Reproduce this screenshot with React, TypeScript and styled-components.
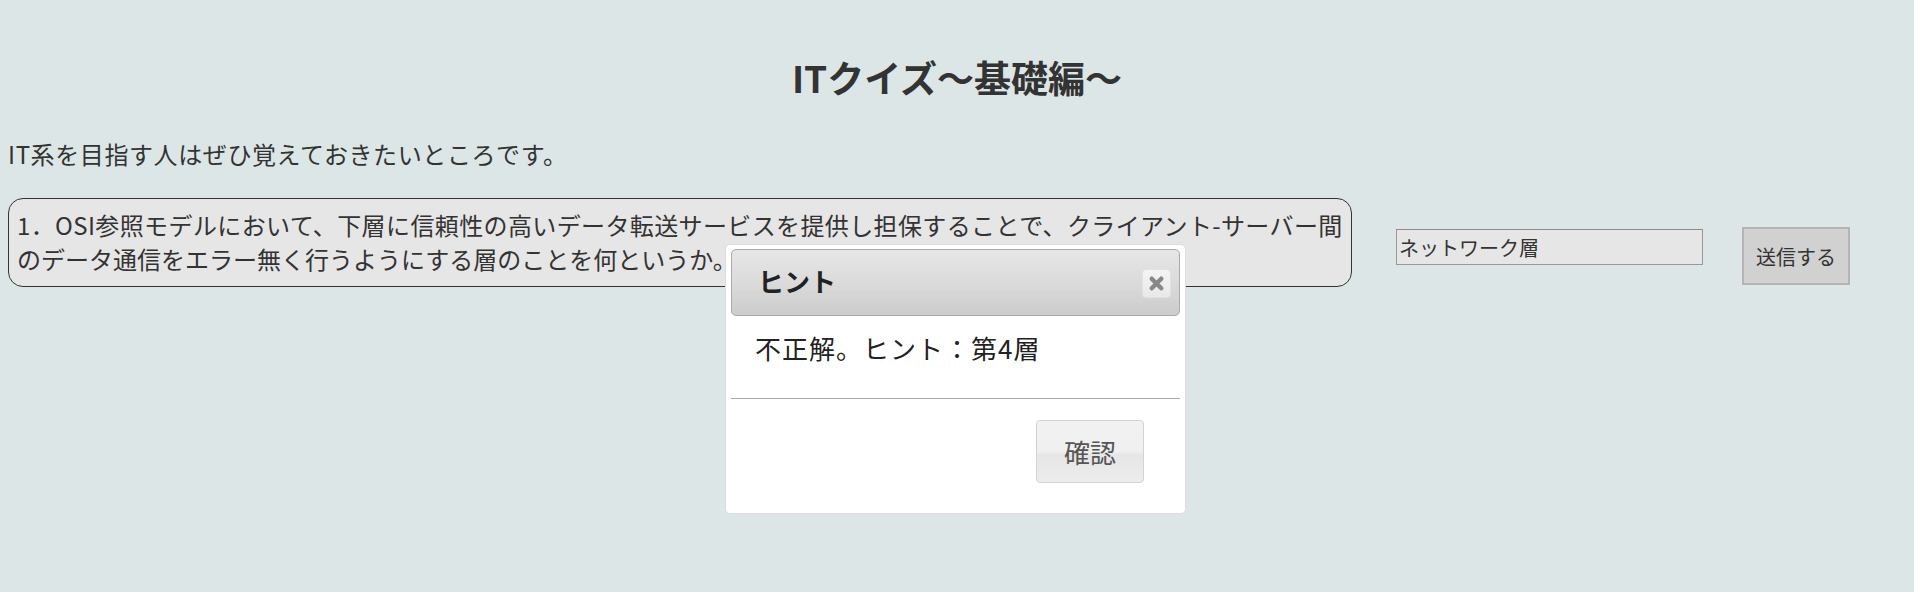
import styled, { createGlobalStyle } from 'styled-components'

const GlobalStyle = createGlobalStyle`
    html, body {
        margin: 0;
        padding: 0;
        background: #dce6e6;
    }
    body {
        font-family: "Noto Sans CJK JP", "Noto Sans", sans-serif;
        color: #333;
    }
`

const Page = styled.div`
    position: relative;
    padding: 0 8px;
    height: 592px;
    box-sizing: border-box;
    overflow: hidden;
`

const Title = styled.h1`
    margin: 0;
    padding-top: 56px;
    font-size: 37px;
    line-height: 43px;
    font-weight: 700;
    text-align: center;
    color: #333;
`

const Intro = styled.p`
    margin: 38px 0 0;
    font-size: 24px;
    line-height: 34px;
    letter-spacing: 0.6px;
`

const QuizRow = styled.div`
    display: flex;
    align-items: flex-start;
    margin-top: 27px;
`

const QuestionBox = styled.div`
    box-sizing: border-box;
    width: 1344px;
    flex-shrink: 0;
    padding: 9px 8px 10px 8px;
    border: 1px solid #333;
    border-radius: 15px;
    background: #e6e6e6;
    font-size: 24px;
    line-height: 34px;
    white-space: nowrap;
`

const QuestionLine = styled.span<{ $spacing?: number }>`
    display: block;
    letter-spacing: ${(p) => p.$spacing ?? 0}px;
`

const AnswerInput = styled.input`
    box-sizing: border-box;
    width: 307px;
    height: 36px;
    margin: 31px 0 0 44px;
    padding: 0 2px;
    border: 1px solid #999;
    border-top-color: #8c8c8c;
    background: #e6e6e6;
    font-family: inherit;
    font-size: 20px;
    color: #333;
    outline: none;
`

const SendButton = styled.button`
    box-sizing: border-box;
    width: 108px;
    height: 58px;
    margin: 29px 0 0 39px;
    border: 2px solid #b4b4b4;
    background: #d1d1d1;
    font-family: inherit;
    font-size: 20px;
    color: #333;
    padding: 0;
`

const Dialog = styled.div`
    position: absolute;
    left: 725px;
    top: 244px;
    box-sizing: border-box;
    width: 461px;
    height: 270px;
    padding: 4px 5px;
    border: 1px solid #dddddd;
    border-radius: 5px;
    background: #fff;
    font-size: 26px;
`

const TitleBar = styled.div`
    display: flex;
    align-items: center;
    justify-content: space-between;
    box-sizing: border-box;
    height: 67px;
    padding: 0 8px 0 26px;
    border: 1px solid #aaaaaa;
    border-radius: 5px;
    background: linear-gradient(#e6e6e6 0%, #dcdcdc 45%, #cccccc 100%);
`

const DialogTitle = styled.span`
    font-size: 26px;
    font-weight: 700;
    color: #222;
    line-height: 1;
    margin-top: -4px;
`

const CloseButton = styled.button`
    display: flex;
    align-items: center;
    justify-content: center;
    width: 29px;
    height: 29px;
    padding: 0;
    margin-top: 2px;
    border: 1px solid #e2e2e2;
    border-radius: 4px;
    background: linear-gradient(#f4f4f4 0%, #eeeeee 55%, #e8e8e8 100%);
`

const DialogBody = styled.div`
    padding: 14px 24px 32px;
    line-height: 36px;
    letter-spacing: 1px;
    color: #222;
`

const ButtonPane = styled.div`
    display: flex;
    justify-content: flex-end;
    border-top: 1px solid #aaaaaa;
    padding: 21px 36px 0 0;
`

const ConfirmButton = styled.button`
    box-sizing: border-box;
    width: 108px;
    height: 63px;
    padding: 0;
    border: 1px solid #d3d3d3;
    border-radius: 4px;
    background: linear-gradient(#f2f2f2 0%, #efefef 50%, #e6e6e6 55%, #ececec 100%);
    font-family: inherit;
    font-size: 26px;
    color: #555;
`

const CloseIcon = () => (
    <svg width="17" height="17" viewBox="0 0 16 16">
        <path d="M3.5 3.5 L12.5 12.5 M12.5 3.5 L3.5 12.5" stroke="#888" strokeWidth="4.2" strokeLinecap="round" />
    </svg>
)

const App = () => {
    return (
        <Page>
            <GlobalStyle />
            <Title>ITクイズ～基礎編～</Title>
            <Intro>IT系を目指す人はぜひ覚えておきたいところです。</Intro>
            <QuizRow>
                <QuestionBox>
                    <QuestionLine $spacing={0.38}>
                        1．OSI参照モデルにおいて、下層に信頼性の高いデータ転送サービスを提供し担保することで、クライアント-サーバー間
                    </QuestionLine>
                    <QuestionLine>のデータ通信をエラー無く行うようにする層のことを何というか。</QuestionLine>
                </QuestionBox>
                <AnswerInput defaultValue="ネットワーク層" />
                <SendButton>送信する</SendButton>
            </QuizRow>
            <Dialog>
                <TitleBar>
                    <DialogTitle>ヒント</DialogTitle>
                    <CloseButton aria-label="close">
                        <CloseIcon />
                    </CloseButton>
                </TitleBar>
                <DialogBody>不正解。ヒント：第4層</DialogBody>
                <ButtonPane>
                    <ConfirmButton>確認</ConfirmButton>
                </ButtonPane>
            </Dialog>
        </Page>
    )
}

export default App
